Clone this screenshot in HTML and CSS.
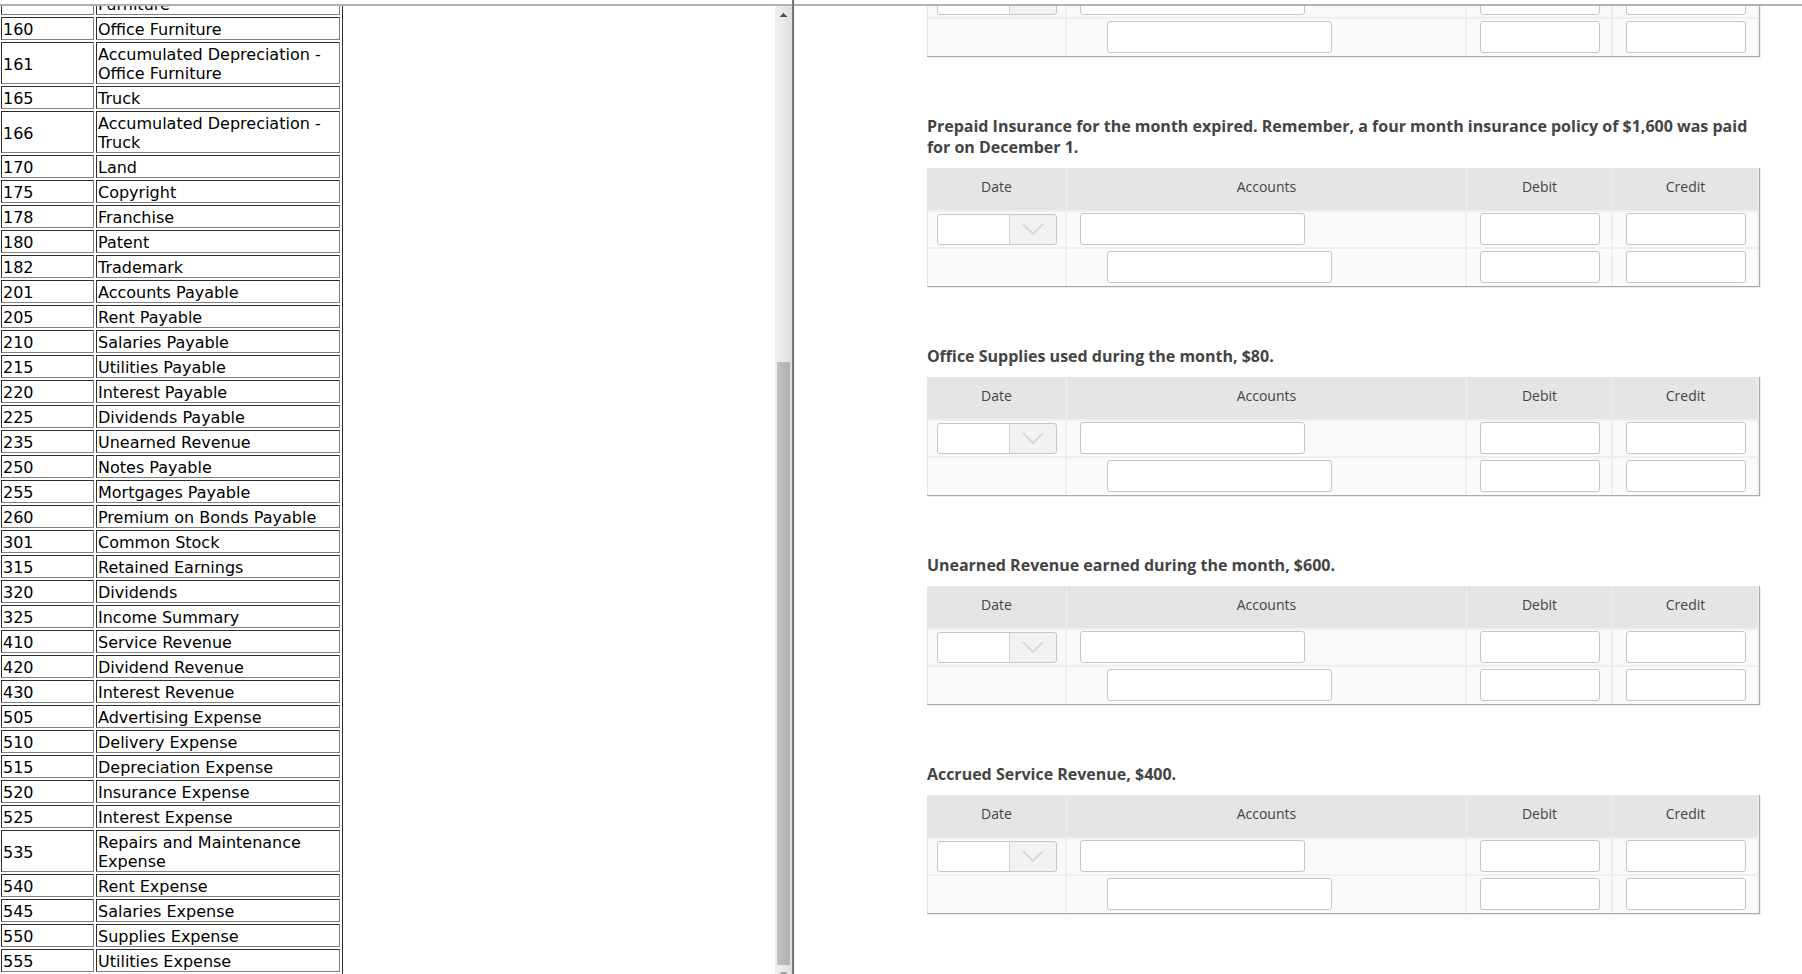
FILE: index.html
```html
<!DOCTYPE html>
<html lang="en">
<head>
    <meta charset="UTF-8">
    <meta name="viewport" content="width=device-width, initial-scale=1.0">
    <title>Adjusting Journal Entries</title>
    <link rel="stylesheet" href="styles.css">
</head>
<body>

    <div class="pane chart-pane">
        <div class="chart-scroll">
            <table class="chart">
                <tbody>
                    <tr><td class="code"></td><td>Furniture</td></tr>
                    <tr><td class="code">160</td><td>Office Furniture</td></tr>
                    <tr><td class="code">161</td><td>Accumulated Depreciation - Office Furniture</td></tr>
                    <tr><td class="code">165</td><td>Truck</td></tr>
                    <tr><td class="code">166</td><td>Accumulated Depreciation - Truck</td></tr>
                    <tr><td class="code">170</td><td>Land</td></tr>
                    <tr><td class="code">175</td><td>Copyright</td></tr>
                    <tr><td class="code">178</td><td>Franchise</td></tr>
                    <tr><td class="code">180</td><td>Patent</td></tr>
                    <tr><td class="code">182</td><td>Trademark</td></tr>
                    <tr><td class="code">201</td><td>Accounts Payable</td></tr>
                    <tr><td class="code">205</td><td>Rent Payable</td></tr>
                    <tr><td class="code">210</td><td>Salaries Payable</td></tr>
                    <tr><td class="code">215</td><td>Utilities Payable</td></tr>
                    <tr><td class="code">220</td><td>Interest Payable</td></tr>
                    <tr><td class="code">225</td><td>Dividends Payable</td></tr>
                    <tr><td class="code">235</td><td>Unearned Revenue</td></tr>
                    <tr><td class="code">250</td><td>Notes Payable</td></tr>
                    <tr><td class="code">255</td><td>Mortgages Payable</td></tr>
                    <tr><td class="code">260</td><td>Premium on Bonds Payable</td></tr>
                    <tr><td class="code">301</td><td>Common Stock</td></tr>
                    <tr><td class="code">315</td><td>Retained Earnings</td></tr>
                    <tr><td class="code">320</td><td>Dividends</td></tr>
                    <tr><td class="code">325</td><td>Income Summary</td></tr>
                    <tr><td class="code">410</td><td>Service Revenue</td></tr>
                    <tr><td class="code">420</td><td>Dividend Revenue</td></tr>
                    <tr><td class="code">430</td><td>Interest Revenue</td></tr>
                    <tr><td class="code">505</td><td>Advertising Expense</td></tr>
                    <tr><td class="code">510</td><td>Delivery Expense</td></tr>
                    <tr><td class="code">515</td><td>Depreciation Expense</td></tr>
                    <tr><td class="code">520</td><td>Insurance Expense</td></tr>
                    <tr><td class="code">525</td><td>Interest Expense</td></tr>
                    <tr><td class="code">535</td><td>Repairs and Maintenance Expense</td></tr>
                    <tr><td class="code">540</td><td>Rent Expense</td></tr>
                    <tr><td class="code">545</td><td>Salaries Expense</td></tr>
                    <tr><td class="code">550</td><td>Supplies Expense</td></tr>
                    <tr><td class="code">555</td><td>Utilities Expense</td></tr>
                </tbody>
            </table>
        </div>
        <div class="scrollbar">
            <svg class="arrow" width="7" height="4" viewBox="0 0 7 4"><path d="M3 0h1v1h1v1h1v1h1v1H0V3h1V2h1V1h1z" fill="#505050"/></svg>
            <div class="track">
                <div class="thumb"></div>
            </div>
            <svg class="arrow arrow-down" width="7" height="4" viewBox="0 0 7 4"><path d="M0 0h7v1H6v1H5v1H4v1H3V3H2V2H1V1H0z" fill="#a3a3a3"/></svg>
        </div>
    </div>

    <div class="divider"></div>

    <div class="pane journal-pane">
        <div class="journal">
            <table class="entry entry-cut">
                <colgroup><col class="col-date"><col><col class="col-amount"><col class="col-amount"></colgroup>
                <tbody>
                    <tr>
                        <td class="date">
                            <div class="picker">
                                <select aria-label="Date"><option></option></select>
                                <svg class="chevron" width="22" height="13" viewBox="0 0 22 13"><path d="M1 1l10 10L21 1" fill="none" stroke="#d9d9d9" stroke-width="2"/></svg>
                            </div>
                        </td>
                        <td><input class="account" type="text" aria-label="Debit account"></td>
                        <td><input class="amount" type="text" aria-label="Debit"></td>
                        <td><input class="amount" type="text" aria-label="Credit"></td>
                    </tr>
                    <tr>
                        <td></td>
                        <td><input class="account indent" type="text" aria-label="Credit account"></td>
                        <td><input class="amount" type="text" aria-label="Debit"></td>
                        <td><input class="amount" type="text" aria-label="Credit"></td>
                    </tr>
                </tbody>
            </table>

            <h2>Prepaid Insurance for the month expired. Remember, a four month insurance policy of $1,600 was paid for on December 1.</h2>
            <table class="entry">
                <colgroup><col class="col-date"><col><col class="col-amount"><col class="col-amount"></colgroup>
                <thead>
                    <tr><th>Date</th><th>Accounts</th><th>Debit</th><th>Credit</th></tr>
                </thead>
                <tbody>
                    <tr>
                        <td class="date">
                            <div class="picker">
                                <select aria-label="Date"><option></option></select>
                                <svg class="chevron" width="22" height="13" viewBox="0 0 22 13"><path d="M1 1l10 10L21 1" fill="none" stroke="#d9d9d9" stroke-width="2"/></svg>
                            </div>
                        </td>
                        <td><input class="account" type="text" aria-label="Debit account"></td>
                        <td><input class="amount" type="text" aria-label="Debit"></td>
                        <td><input class="amount" type="text" aria-label="Credit"></td>
                    </tr>
                    <tr>
                        <td></td>
                        <td><input class="account indent" type="text" aria-label="Credit account"></td>
                        <td><input class="amount" type="text" aria-label="Debit"></td>
                        <td><input class="amount" type="text" aria-label="Credit"></td>
                    </tr>
                </tbody>
            </table>

            <h2>Office Supplies used during the month, $80.</h2>
            <table class="entry">
                <colgroup><col class="col-date"><col><col class="col-amount"><col class="col-amount"></colgroup>
                <thead>
                    <tr><th>Date</th><th>Accounts</th><th>Debit</th><th>Credit</th></tr>
                </thead>
                <tbody>
                    <tr>
                        <td class="date">
                            <div class="picker">
                                <select aria-label="Date"><option></option></select>
                                <svg class="chevron" width="22" height="13" viewBox="0 0 22 13"><path d="M1 1l10 10L21 1" fill="none" stroke="#d9d9d9" stroke-width="2"/></svg>
                            </div>
                        </td>
                        <td><input class="account" type="text" aria-label="Debit account"></td>
                        <td><input class="amount" type="text" aria-label="Debit"></td>
                        <td><input class="amount" type="text" aria-label="Credit"></td>
                    </tr>
                    <tr>
                        <td></td>
                        <td><input class="account indent" type="text" aria-label="Credit account"></td>
                        <td><input class="amount" type="text" aria-label="Debit"></td>
                        <td><input class="amount" type="text" aria-label="Credit"></td>
                    </tr>
                </tbody>
            </table>

            <h2>Unearned Revenue earned during the month, $600.</h2>
            <table class="entry">
                <colgroup><col class="col-date"><col><col class="col-amount"><col class="col-amount"></colgroup>
                <thead>
                    <tr><th>Date</th><th>Accounts</th><th>Debit</th><th>Credit</th></tr>
                </thead>
                <tbody>
                    <tr>
                        <td class="date">
                            <div class="picker">
                                <select aria-label="Date"><option></option></select>
                                <svg class="chevron" width="22" height="13" viewBox="0 0 22 13"><path d="M1 1l10 10L21 1" fill="none" stroke="#d9d9d9" stroke-width="2"/></svg>
                            </div>
                        </td>
                        <td><input class="account" type="text" aria-label="Debit account"></td>
                        <td><input class="amount" type="text" aria-label="Debit"></td>
                        <td><input class="amount" type="text" aria-label="Credit"></td>
                    </tr>
                    <tr>
                        <td></td>
                        <td><input class="account indent" type="text" aria-label="Credit account"></td>
                        <td><input class="amount" type="text" aria-label="Debit"></td>
                        <td><input class="amount" type="text" aria-label="Credit"></td>
                    </tr>
                </tbody>
            </table>

            <h2>Accrued Service Revenue, $400.</h2>
            <table class="entry">
                <colgroup><col class="col-date"><col><col class="col-amount"><col class="col-amount"></colgroup>
                <thead>
                    <tr><th>Date</th><th>Accounts</th><th>Debit</th><th>Credit</th></tr>
                </thead>
                <tbody>
                    <tr>
                        <td class="date">
                            <div class="picker">
                                <select aria-label="Date"><option></option></select>
                                <svg class="chevron" width="22" height="13" viewBox="0 0 22 13"><path d="M1 1l10 10L21 1" fill="none" stroke="#d9d9d9" stroke-width="2"/></svg>
                            </div>
                        </td>
                        <td><input class="account" type="text" aria-label="Debit account"></td>
                        <td><input class="amount" type="text" aria-label="Debit"></td>
                        <td><input class="amount" type="text" aria-label="Credit"></td>
                    </tr>
                    <tr>
                        <td></td>
                        <td><input class="account indent" type="text" aria-label="Credit account"></td>
                        <td><input class="amount" type="text" aria-label="Debit"></td>
                        <td><input class="amount" type="text" aria-label="Credit"></td>
                    </tr>
                </tbody>
            </table>
        </div>
    </div>

</body>
</html>
```

FILE: styles.css
```css
* {
    box-sizing: border-box;
}

body {
    margin: 0;
    height: 100vh;
    display: flex;
    overflow: hidden;
    background-color: #fff;
    font-family: "Open Sans", sans-serif;
    color: #444;
}

.pane {
    margin-top: 4px;
    border-top: 2px solid #b1b1b1;
    overflow: hidden;
}

.chart-pane {
    flex: 0 0 calc(44% - 1px);
    display: flex;
}

.journal-pane {
    flex: 1;
}

.divider {
    width: 2px;
    background: linear-gradient(to right, #8c8c8c, #5a5a5a);
}

/* Chart of accounts */
.chart-scroll {
    flex: 1;
    overflow: hidden;
}

.chart {
    width: 344px;
    margin: -16px 0 0 -1px;
    border-right: 1px solid #2c2c2c;
    border-spacing: 2px;
    table-layout: fixed;
    font-family: Verdana, "DejaVu Sans", sans-serif;
    font-size: 16px;
    line-height: 19px;
    color: #000;
}

.chart td {
    height: 23px;
    padding: 2px 1px 0;
    border: 1px solid;
    border-color: #2c2c2c #808080 #808080 #2c2c2c;
}

.chart .code {
    width: 93px;
}

/* Scrollbar */
.scrollbar {
    width: 17px;
    display: flex;
    flex-direction: column;
    align-items: center;
    background: linear-gradient(to right, #f1f1f1, #dedede);
}

.arrow {
    flex: none;
    margin: 7px 0 6px;
}

.arrow-down {
    margin-bottom: -2px;
}

.track {
    flex: 1;
    width: 13px;
    display: flex;
    flex-direction: column;
    justify-content: flex-end;
}

.thumb {
    height: 64%;
    background: linear-gradient(to right, #c1c1c1, #b0b0b0);
}

/* Journal entries */
.journal {
    padding: 0 42px 0 133px;
}

h2 {
    margin: 59px 0 10px;
    font-size: 16px;
    line-height: 21px;
    font-weight: 700;
}

.entry {
    width: 100%;
    table-layout: fixed;
    border-collapse: separate;
    border-spacing: 0;
    border-right: 1px solid #aaa;
    border-bottom: 1px solid #aaa;
    box-shadow: 1px 1px 0 #ececec;
}

.entry-cut {
    margin-top: -26px;
}

.col-date {
    width: 140px;
}

.col-amount {
    width: 146px;
}

.entry th {
    height: 42px;
    padding: 0 0 4px;
    border-right: 1px solid #efefef;
    background-color: #e5e5e5;
    font-size: 14px;
    line-height: 20px;
    font-weight: 500;
    text-align: center;
}

.entry td {
    height: 37px;
    padding: 1px 0 2px 13px;
    border-top: 2px solid #efefef;
    border-right: 2px solid #efefef;
    background-color: #fafafa;
    vertical-align: middle;
}

.entry tr:last-child td {
    height: 39px;
    padding-top: 2px;
    padding-bottom: 3px;
}

.entry td:first-child {
    padding-left: 9px;
    border-left: 1px solid #e5e5e5;
}

.entry input {
    display: block;
    width: 120px;
    height: 32px;
    padding: 0 6px;
    border: 1px solid #c6c6c6;
    border-radius: 3px;
    background-color: #fff;
    font: inherit;
}

.entry .account {
    width: 225px;
}

.entry .indent {
    margin-left: 27px;
}

.picker {
    position: relative;
    width: 120px;
}

.picker select {
    display: block;
    width: 120px;
    height: 31px;
    padding: 0 50px 0 6px;
    border: 1px solid #c6c6c6;
    border-radius: 3px;
    -webkit-appearance: none;
    appearance: none;
    background: linear-gradient(to right, #fff 71px, #d0d0d0 71px, #d0d0d0 72px, #f2f2f2 72px);
    font: inherit;
}

.chevron {
    position: absolute;
    top: 9px;
    right: 13px;
    pointer-events: none;
}
```
